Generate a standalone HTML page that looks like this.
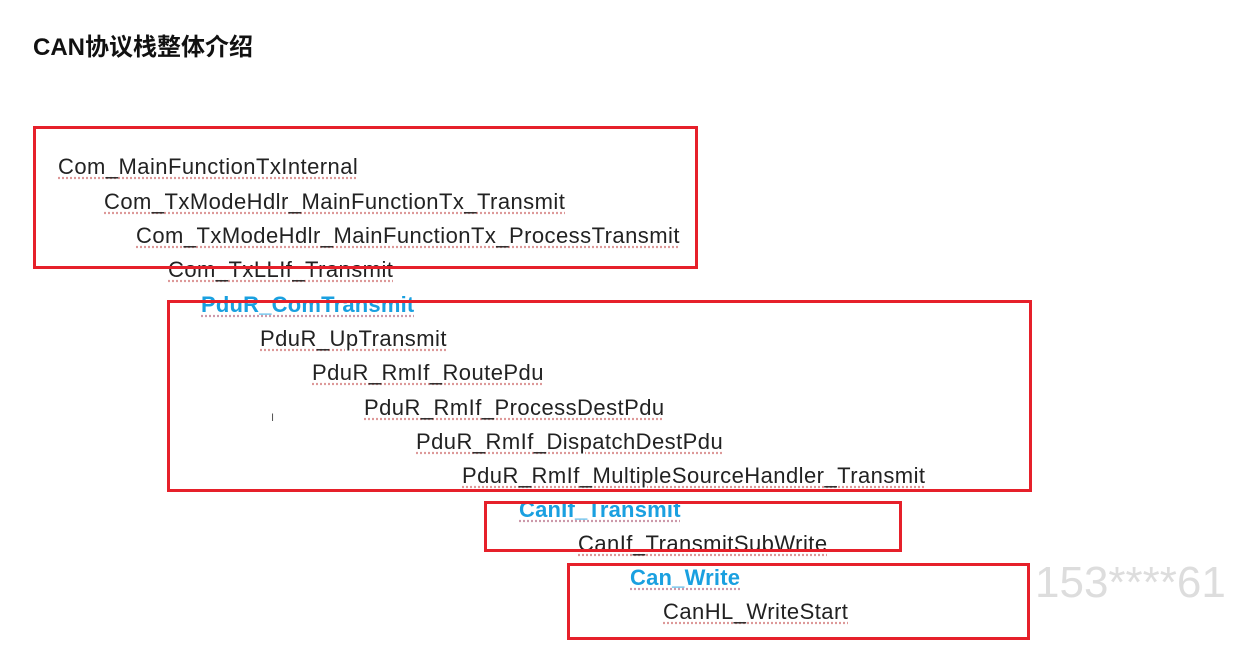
<!DOCTYPE html>
<html><head><meta charset="utf-8"><style>
body{margin:0;width:1235px;height:648px;background:#fff;position:relative;overflow:hidden;font-family:"Liberation Sans","Noto Sans CJK SC",sans-serif}
.t{position:absolute;font-size:22px;letter-spacing:0.45px;color:#222;line-height:24px;white-space:nowrap;text-decoration:underline dotted #d99;text-underline-offset:3px}
.b{color:#1aa0e0;font-weight:bold;letter-spacing:0.2px;text-decoration:underline dotted #c9a}
.box{position:absolute;border:3px solid #e6202a;box-sizing:border-box}
</style></head><body>
<div style="position:absolute;left:33px;top:27px;font-size:24px;font-weight:bold;color:#111">CAN协议栈整体介绍</div>
<div class="t" style="left:58px;top:155px">Com_MainFunctionTxInternal</div>
<div class="t" style="left:104px;top:190px">Com_TxModeHdlr_MainFunctionTx_Transmit</div>
<div class="t" style="left:136px;top:224px">Com_TxModeHdlr_MainFunctionTx_ProcessTransmit</div>
<div class="t" style="left:168px;top:258px">Com_TxLLIf_Transmit</div>
<div class="t b" style="left:201px;top:293px">PduR_ComTransmit</div>
<div class="t" style="left:260px;top:327px">PduR_UpTransmit</div>
<div class="t" style="left:312px;top:361px">PduR_RmIf_RoutePdu</div>
<div class="t" style="left:364px;top:396px">PduR_RmIf_ProcessDestPdu</div>
<div class="t" style="left:416px;top:430px">PduR_RmIf_DispatchDestPdu</div>
<div class="t" style="left:462px;top:464px">PduR_RmIf_MultipleSourceHandler_Transmit</div>
<div class="t b" style="left:519px;top:498px">CanIf_Transmit</div>
<div class="t" style="left:578px;top:532px">CanIf_TransmitSubWrite</div>
<div class="t b" style="left:630px;top:566px">Can_Write</div>
<div class="t" style="left:663px;top:600px">CanHL_WriteStart</div>
<div style="position:absolute;left:271px;top:412px;font-size:11px;color:#555">I</div>
<div class="box" style="left:33px;top:126px;width:665px;height:143px"></div>
<div class="box" style="left:167px;top:300px;width:865px;height:192px"></div>
<div class="box" style="left:484px;top:501px;width:418px;height:51px"></div>
<div class="box" style="left:567px;top:563px;width:463px;height:77px"></div>
<div style="position:absolute;left:1035px;top:558px;font-size:44px;color:#ddd">153****61</div>
</body></html>
